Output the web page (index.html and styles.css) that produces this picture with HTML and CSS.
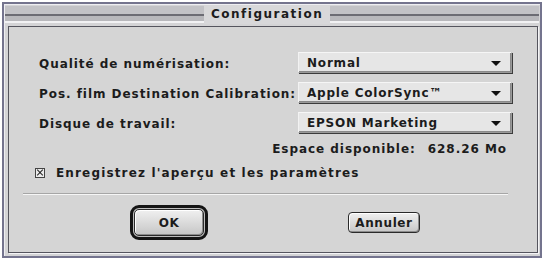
FILE: index.html
```html
<!DOCTYPE html>
<html lang="fr">
<head>
<meta charset="utf-8">
<title>Configuration</title>
<link rel="stylesheet" href="styles.css">
</head>
<body>
<div class="window">
  <div class="titlebar">
    <div class="stripes stripes-left"></div>
    <div class="title">Configuration</div>
    <div class="stripes"></div>
  </div>
  <div class="panel">
    <div class="rows">
      <div class="row">
        <span class="label">Qualité de numérisation:</span>
        <div class="popup"><span>Normal</span><span class="arrow"></span></div>
      </div>
      <div class="row">
        <span class="label">Pos. film Destination Calibration:</span>
        <div class="popup"><span>Apple ColorSync™</span><span class="arrow"></span></div>
      </div>
      <div class="row">
        <span class="label">Disque de travail:</span>
        <div class="popup"><span>EPSON Marketing</span><span class="arrow"></span></div>
      </div>
    </div>
    <div class="space"><span>Espace disponible:</span><span>628.26 Mo</span></div>
    <div class="check-row">
      <span class="checkbox"></span>
      <span class="label check-label">Enregistrez l'aperçu et les paramètres</span>
    </div>
    <div class="separator"></div>
    <div class="buttons">
      <div class="default-ring"><div class="btn btn-ok">OK</div></div>
      <div class="btn btn-cancel">Annuler</div>
    </div>
  </div>
</div>
</body>
</html>
```
FILE: styles.css
```css
* { box-sizing: border-box; }
html, body { margin: 0; padding: 0; background: #ffffff; }
body {
  font-family: "DejaVu Sans", "Liberation Sans", sans-serif;
  font-weight: bold;
  font-size: 12px;
  color: #1c1c1c;
  letter-spacing: 0.95px;
}
.window {
  margin: 2px 0 0 2px;
  width: 540px;
  height: 256px;
  border: 2px solid #74748e;
  background: #d4d4d6;
  box-shadow: inset 1px 1px 0 #eeeef2;
  padding: 1px 1px 2px 1px;
  display: flex;
  flex-direction: column;
}
.titlebar {
  height: 19px;
  display: flex;
  align-items: stretch;
  margin: 0 0 1px 0;
}
.stripes {
  flex: 1;
  margin: 1px 0;
  background: linear-gradient(to bottom,
    #c2c2c6 0 8px, #6c6c74 8px 10px, #b8b8bc 10px 15px, #f2f2f4 15px 17px);
}
.stripes-left { flex: 0 0 199px; }
.title {
  padding: 0 7px;
  background: #d8d8da;
  line-height: 19px;
  font-size: 12px;
  letter-spacing: 1.5px;
}
.panel {
  flex: 1;
  margin: 1px 1px 1px 3px;
  border: 1px solid #55555e;
  background: #d5d5d5;
  box-shadow: 1px 1px 0 #f4f4f6;
  display: flex;
  flex-direction: column;
  padding: 25px 24px 0 30px;
}
.rows {
  display: flex;
  flex-direction: column;
  gap: 9px;
}
.row {
  display: flex;
  align-items: center;
  height: 21px;
}
.row .label { width: 259px; white-space: nowrap; padding-top: 2px; }
.popup {
  width: 214px;
  height: 21px;
  display: flex;
  align-items: center;
  justify-content: space-between;
  padding: 0 10px 0 8px;
  background: #e6e6e6;
  border: 1px solid #9a9a9a;
  border-top-color: #f6f6f6;
  border-left-color: #f2f2f2;
  box-shadow: 1px 1px 0 #3c3c3c, inset -1px -1px 0 #8a8a8a;
  letter-spacing: 0.8px;
}
.arrow {
  width: 0;
  height: 0;
  border-left: 5px solid transparent;
  border-right: 5px solid transparent;
  border-top: 5px solid #111;
  margin-top: 2px;
}
.space {
  display: flex;
  justify-content: flex-end;
  gap: 12px;
  margin: 8px 0 0 0;
  padding-right: 6px;
  height: 16px;
  line-height: 16px;
}
.check-row {
  display: flex;
  align-items: center;
  height: 16px;
  margin: 8px 0 0 -4px;
  gap: 11px;
}
.check-label { letter-spacing: 1.15px; }
.checkbox {
  width: 10px;
  height: 10px;
  border: 1px solid #444;
  background: #ececec;
  position: relative;
}
.checkbox::before, .checkbox::after {
  content: "";
  position: absolute;
  left: 0px;
  top: 3px;
  width: 8px;
  height: 1px;
  background: #222;
  transform: rotate(45deg);
}
.checkbox::after { transform: rotate(-45deg); }
.separator {
  margin: 12px 5px 0 -16px;
  height: 2px;
  border-top: 1px solid #a6a6a6;
  border-bottom: 1px solid #f6f6f6;
}
.buttons {
  display: flex;
  align-items: center;
  margin: 10px 0 0 91px;
  gap: 140px;
}
.default-ring {
  width: 78px;
  height: 35px;
  border: 3px solid #141414;
  border-radius: 9px;
  padding: 1px;
  background: #bdbdbd;
}
.btn {
  display: flex;
  align-items: center;
  justify-content: center;
  border: 1px solid #2a2a2a;
  border-radius: 5px;
  background: linear-gradient(to bottom, #f0f0f0, #c6c6c6);
  box-shadow: inset 1px 1px 0 #ffffff, inset -1px -1px 0 #8c8c8c;
  letter-spacing: 0.6px;
}
.btn-ok {
  width: 100%;
  height: 100%;
}
.btn-cancel {
  width: 72px;
  height: 21px;
  border-radius: 4px;
}
```
